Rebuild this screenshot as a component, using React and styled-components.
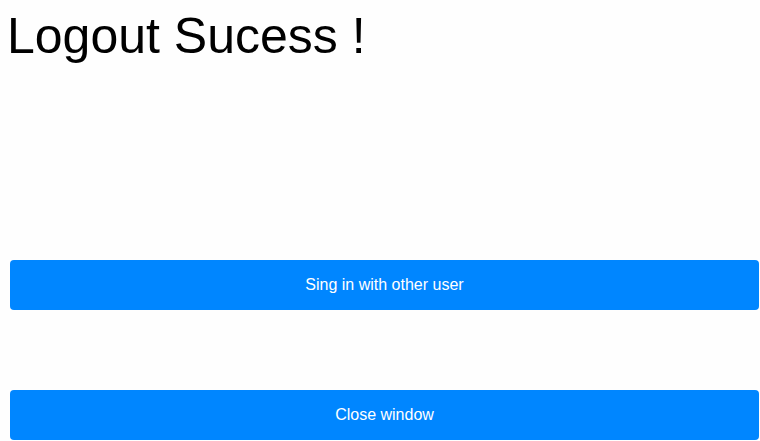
import React from 'react';
import styled, { createGlobalStyle } from 'styled-components';

const GlobalStyle = createGlobalStyle`
    body {
        margin: 0;
        background: #fefefe;
        font-family: 'Liberation Sans', Arial, sans-serif;
    }
`;

const Page = styled.div`
    display: flex;
    flex-direction: column;
    padding: 0 1px 0 10px;
`;

const Title = styled.h1`
    margin: 7px 0 0 -3px;
    font-size: 50px;
    font-weight: 400;
    line-height: 58px;
    color: #000;
`;

const Actions = styled.div`
    display: flex;
    flex-direction: column;
    gap: 80px;
    margin-top: 195px;
`;

const Button = styled.button`
    height: 50px;
    width: 100%;
    border: none;
    border-radius: 4px;
    background: #0086ff;
    color: #fff;
    font-family: 'Liberation Sans', Arial, sans-serif;
    font-size: 16px;
    cursor: pointer;
`;

const App = () => {
    return (
        <Page>
            <GlobalStyle />
            <Title>Logout Sucess !</Title>
            <Actions>
                <Button>Sing in with other user</Button>
                <Button>Close window</Button>
            </Actions>
        </Page>
    );
}

export default App;
